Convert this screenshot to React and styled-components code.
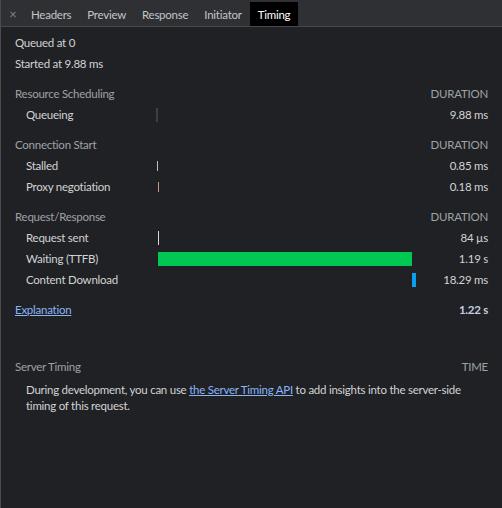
import React from 'react';
import styled, { createGlobalStyle } from 'styled-components';

const GlobalStyle = createGlobalStyle`
  html, body {
    margin: 0;
    padding: 0;
    background: #202124;
  }
  body {
    font-family: "Lato", "Open Sans", sans-serif;
    font-size: 11.5px;
    letter-spacing: -0.25px;
  }
`;

const Panel = styled.div`
  width: 502px;
  height: 508px;
  box-sizing: border-box;
  background: #202124;
  border-left: 1px solid #4a4c50;
  color: #d4d4d4;
  overflow: hidden;
`;

const TabBar = styled.div`
  display: flex;
  align-items: flex-end;
  height: 26px;
  background: #2f3033;
  border-bottom: 1px solid #46484c;
  padding-left: 6px;
`;

const Close = styled.span`
  width: 12px;
  height: 24px;
  display: flex;
  align-items: center;
  justify-content: center;
  color: #7e8185;
  font-size: 13px;
  margin-right: 4px;
`;

const Tab = styled.div`
  height: 24px;
  display: flex;
  align-items: center;
  padding: 0 8px;
  color: ${(p) => (p.active ? '#ffffff' : '#c3c5c8')};
  background: ${(p) => (p.active ? '#000000' : 'transparent')};
`;

const Content = styled.div`
  padding: 5px 14px 0 14px;
`;

const Line = styled.div`
  height: 21px;
  line-height: 21px;
  color: #d2d3d5;
`;

const Section = styled.div`
  margin-top: ${(p) => p.gap || 9}px;
`;

const Grid = styled.div`
  display: grid;
  grid-template-columns: 141px 260px 72px;
  grid-auto-rows: 21px;
  align-items: center;
`;

const Heading = styled.div`
  color: #9ea1a6;
`;

const ColumnLabel = styled.div`
  grid-column: 3;
  text-align: right;
  color: #9ea1a6;
`;

const Name = styled.div`
  padding-left: 11px;
  color: #d2d3d5;
  white-space: nowrap;
`;

const Track = styled.div`
  height: 21px;
  display: flex;
  align-items: center;
`;

const Bar = styled.div`
  height: ${(p) => p.h}px;
  background: ${(p) => p.color};
`;

const Value = styled.div`
  text-align: right;
  color: #d2d3d5;
  white-space: nowrap;
`;

const Link = styled.a`
  color: #8ab4f8;
  text-decoration: underline;
  cursor: pointer;
`;

const Total = styled.div`
  grid-column: 3;
  text-align: right;
  color: #c5cee0;
  font-weight: 700;
`;

const Paragraph = styled.p`
  margin: 5px 0 0;
  padding-left: 11px;
  padding-right: 18px;
  line-height: 16px;
  color: #d2d3d5;
`;

const sections = [
  {
    title: 'Resource Scheduling',
    rows: [{ name: 'Queueing', left: 0, width: 2, h: 14, color: '#3c3f43', value: '9.88 ms' }],
  },
  {
    title: 'Connection Start',
    rows: [
      { name: 'Stalled', left: 1, width: 1, h: 10, color: '#bdbdbd', value: '0.85 ms' },
      { name: 'Proxy negotiation', left: 2, width: 1, h: 10, color: '#c39b8a', value: '0.18 ms' },
    ],
  },
  {
    title: 'Request/Response',
    rows: [
      { name: 'Request sent', left: 2, width: 1, h: 14, color: '#d8d8d8', value: '84 \u00b5s' },
      { name: 'Waiting (TTFB)', left: 2, width: 254, h: 14, color: '#00c853', value: '1.19 s' },
      { name: 'Content Download', left: 256, width: 4, h: 14, color: '#0b9ef0', value: '18.29 ms' },
    ],
  },
];

const tabs = ['Headers', 'Preview', 'Response', 'Initiator', 'Timing'];

const App = () => (
  <>
    <GlobalStyle />
    <Panel>
      <TabBar>
        <Close>×</Close>
        {tabs.map((t) => (
          <Tab key={t} active={t === 'Timing'}>
            {t}
          </Tab>
        ))}
      </TabBar>
      <Content>
        <Line>Queued at 0</Line>
        <Line>Started at 9.88 ms</Line>
        {sections.map((s) => (
          <Section key={s.title}>
            <Grid>
              <Heading>{s.title}</Heading>
              <ColumnLabel>DURATION</ColumnLabel>
              {s.rows.map((r) => (
                <React.Fragment key={r.name}>
                  <Name>{r.name}</Name>
                  <Track>
                    <Bar
                      h={r.h}
                      color={r.color}
                      style={{ marginLeft: r.left, width: r.width }}
                    />
                  </Track>
                  <Value>{r.value}</Value>
                </React.Fragment>
              ))}
            </Grid>
          </Section>
        ))}
        <Section>
          <Grid>
            <div>
              <Link>Explanation</Link>
            </div>
            <Total>1.22 s</Total>
          </Grid>
        </Section>
        <Section gap={36}>
          <Grid>
            <Heading>Server Timing</Heading>
            <ColumnLabel>TIME</ColumnLabel>
          </Grid>
          <Paragraph>
            During development, you can use <Link>the Server Timing API</Link> to add
            insights into the server-side timing of this request.
          </Paragraph>
        </Section>
      </Content>
    </Panel>
  </>
);

export default App;
